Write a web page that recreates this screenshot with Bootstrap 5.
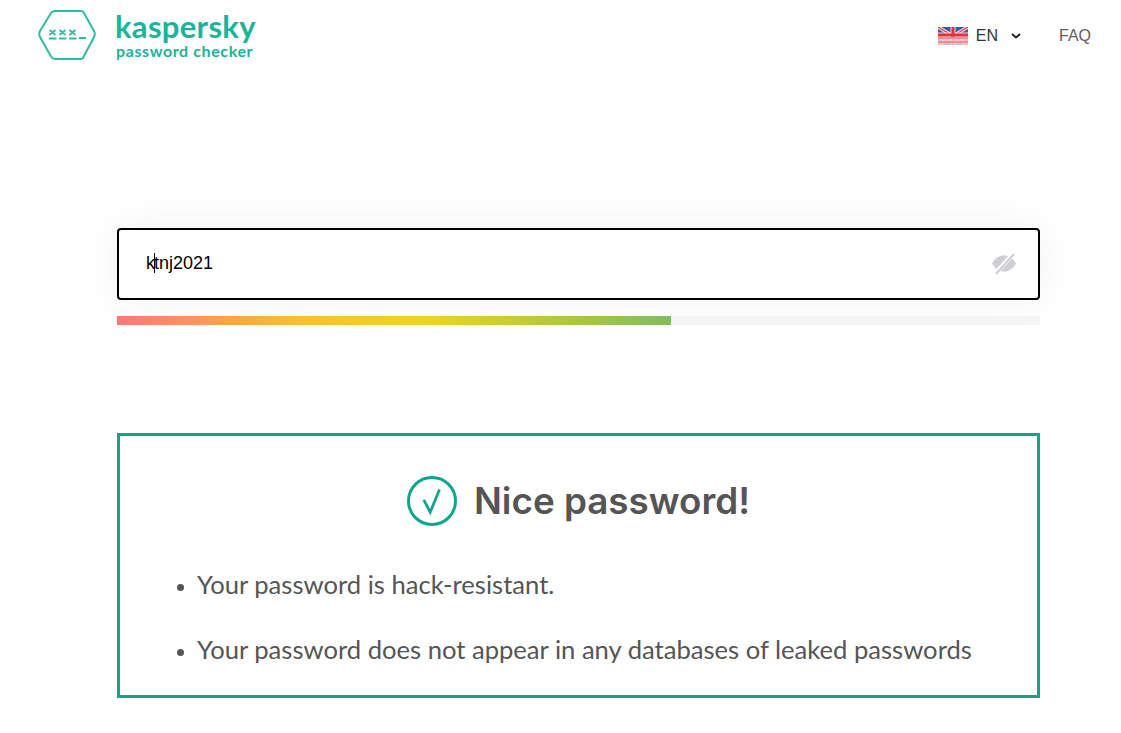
<!DOCTYPE html>
<html lang="en">
<head>
  <meta charset="UTF-8" />
  <title>Kaspersky Password Checker</title>
  <meta name="viewport" content="width=device-width, initial-scale=1" />
  <link href="https://cdn.jsdelivr.net/npm/bootstrap@5.3.0/dist/css/bootstrap.min.css" rel="stylesheet" />
  <style>
    html, body {
      height: 100%;
      overflow: hidden;
    }

    body {
      font-family: "Lato", sans-serif;
      color: #555;
      background: #fff;
    }

    /* Header */
    .top-bar {
      height: 70px;
      padding: 9px 30px 0 38px;
    }

    .brand-link {
      color: #1ab498;
      text-decoration: none;
      gap: 19px;
    }

    .brand-name {
      font-size: 31px;
      font-weight: 700;
      line-height: 35px;
      letter-spacing: 0.3px;
    }

    .brand-sub {
      font-size: 16px;
      font-weight: 700;
      line-height: 14px;
      letter-spacing: 0.6px;
      margin-left: 1px;
    }

    .header-right {
      margin-top: 15px;
    }

    .lang-picker {
      color: #333;
      font-family: "Liberation Sans", sans-serif;
      font-size: 16px;
      gap: 8px;
    }

    .lang-picker svg {
      flex-shrink: 0;
    }

    .lang-chevron {
      margin-left: 5px;
    }

    .faq-link {
      color: #6a5a5a;
      font-family: "Liberation Sans", sans-serif;
      font-size: 16px;
      text-decoration: none;
      margin-left: 38px;
    }

    /* Password field */
    .checker-wrap {
      width: 923px;
      margin: 158px auto 0 117px;
    }

    .pw-field {
      height: 72px;
      border: 2px solid #000;
      border-radius: 4px;
      padding: 0 21px 2px 27px;
      background: #fff;
      box-shadow: 0 0 40px rgba(0, 0, 0, 0.06);
      color: #000;
      font-family: "Liberation Sans", sans-serif;
      font-size: 18px;
    }

    .pw-caret {
      display: inline-block;
      width: 1px;
      height: 20px;
      background: #000;
      margin: 0 -1px;
      vertical-align: -4px;
    }

    .strength-track {
      height: 9px;
      margin-top: 16px;
      background: #f5f5f5;
      border-radius: 0;
    }

    .strength-fill {
      background: linear-gradient(90deg, #f47a7a 0%, #fbbf33 33%, #f0d420 55%, #7fbd5e 100%);
    }

    /* Result box */
    .result-box {
      height: 265px;
      margin-top: 108px;
      border: 3px solid #0ba78c;
      padding: 40px 0 0 54px;
    }

    .result-head {
      gap: 17px;
      margin-left: -54px;
      margin-bottom: 43px;
    }

    .result-head h1 {
      color: #555;
      font-family: "Inter", sans-serif;
      font-size: 36.8px;
      font-weight: 600;
      margin: 0;
      line-height: 50px;
    }

    .result-list {
      font-size: 25.6px;
      line-height: 30px;
      margin: 0;
      padding-left: 23px;
    }

    .result-list li + li {
      margin-top: 35px;
    }

    .result-list li::marker {
      font-size: 20px;
    }
  </style>
</head>
<body>

  <!-- Header -->
  <header class="top-bar d-flex justify-content-between align-items-start">
    <a class="brand-link d-flex align-items-start" href="#">
      <svg width="58" height="52" viewBox="0 0 58 52" fill="none" stroke="#2dbca0">
        <path d="M2 22 13 4Q14.500 2 17 2H43Q45 2 46 4L56 22Q57.500 25 56 28L46 47Q45 50 43 50H17Q14.500 50 13 47.500L2 28Q.5 25 2 22Z" stroke-width="2"/>
        <path d="M11.500 21l6 5m0-5l-6 5M21.500 21l6 5m0-5l-6 5M31.500 21l6 5m0-5l-6 5" stroke-width="1.800"/>
        <path d="M11 29.500h7.500M21 29.500h7.500M31 29.500h7.500M41 29h7" stroke-width="1.800"/>
      </svg>
      <div class="d-flex flex-column">
        <span class="brand-name">kaspersky</span>
        <span class="brand-sub">password checker</span>
      </div>
    </a>
    <div class="header-right d-flex align-items-center">
      <div class="lang-picker d-flex align-items-center">
        <svg width="30" height="18" viewBox="0 0 30 18">
          <rect width="30" height="18" fill="#2f5da8"/>
          <path d="M0 0 30 18M30 0 0 18" stroke="#f5d5d8" stroke-width="3.500"/>
          <path d="M0 0 30 18M30 0 0 18" stroke="#e2434f" stroke-width="1.200"/>
          <path d="M15 0V18M0 8H30" stroke="#f5d5d8" stroke-width="5"/>
          <path d="M15 0V18M0 8H30" stroke="#e2303f" stroke-width="3"/>
          <path d="M0 11H30M0 15H30" stroke="#f48a92" stroke-width="2.500"/>
          <path d="M0 13H30M0 17H30" stroke="#fbdcdf" stroke-width="1.500"/>
        </svg>
        <span>EN</span>
        <svg class="lang-chevron" width="10" height="6" viewBox="0 0 10 6" fill="none" stroke="#222" stroke-width="2"><path d="M1 1 5 4.500 9 1"/></svg>
      </div>
      <a class="faq-link" href="#">FAQ</a>
    </div>
  </header>

  <main class="checker-wrap">
    <!-- Password field -->
    <div class="pw-field d-flex align-items-center justify-content-between">
      <span>k<i class="pw-caret"></i>tnj2021</span>
      <svg width="26" height="24" viewBox="0 0 26 24">
        <path d="M1 12.500C5 6 9 4.500 13 4.500S21 6 25 12.500C21 19 17 20.500 13 20.500S5 19 1 12.500Z" fill="#d0ced2"/>
        <path d="M4 23 23 2" stroke="#fff" stroke-width="4.500"/>
        <path d="M5 23 23 3" stroke="#d0ced2" stroke-width="2"/>
      </svg>
    </div>
    <div class="strength-track progress">
      <div class="strength-fill progress-bar" style="width: 60%"></div>
    </div>

    <!-- Result -->
    <section class="result-box">
      <div class="result-head d-flex justify-content-center align-items-center">
        <svg width="50" height="50" viewBox="0 0 50 50" fill="none" stroke="#0ba78c">
          <circle cx="25" cy="25" r="23.500" stroke-width="3"/>
          <path d="M16.800 23.800 23.200 36.200 32.500 13.500" stroke-width="2.800"/>
        </svg>
        <h1>Nice password!</h1>
      </div>
      <ul class="result-list">
        <li>Your password is hack-resistant.</li>
        <li>Your password does not appear in any databases of leaked passwords</li>
      </ul>
    </section>
  </main>

  <script src="https://cdn.jsdelivr.net/npm/bootstrap@5.3.0/dist/js/bootstrap.bundle.min.js"></script>
</body>
</html>
